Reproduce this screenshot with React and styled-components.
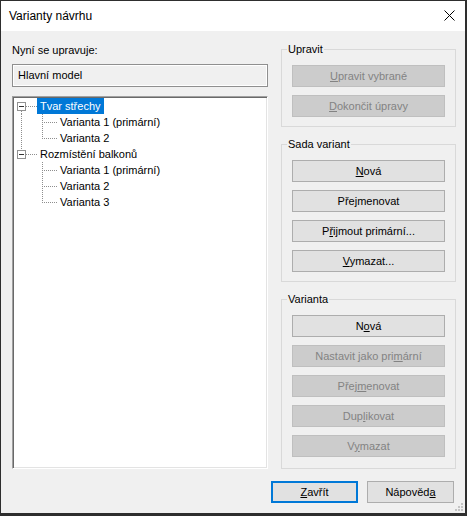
import React from 'react';
import styled, { createGlobalStyle } from 'styled-components';

const GlobalStyle = createGlobalStyle`
  html, body {
    margin: 0;
    padding: 0;
    background: #f0f0f0;
  }
  body {
    font-family: "Liberation Sans", Arial, sans-serif;
    font-size: 11px;
    color: #000;
  }
  * { box-sizing: border-box; }
`;

const tree = [
  { label: 'Tvar střechy', selected: true, children: ['Varianta 1 (primární)', 'Varianta 2'] },
  { label: 'Rozmístění balkonů', children: ['Varianta 1 (primární)', 'Varianta 2', 'Varianta 3'] },
];

function App() {
  return (
    <>
      <GlobalStyle />
      <Window>
        <TitleBar>
          <Title>Varianty návrhu</Title>
          <CloseButton>
            <svg width="11" height="11" viewBox="0 0 11 11">
              <path d="M0.5 0.5 L10.5 10.5 M10.5 0.5 L0.5 10.5" stroke="#000" strokeWidth="1" />
            </svg>
          </CloseButton>
        </TitleBar>

        <Content>
          <LeftColumn>
            <Label>Nyní se upravuje:</Label>
            <ReadOnlyField>Hlavní model</ReadOnlyField>
            <TreeBox>
              {tree.map((node, i) => {
                const hasPrev = i > 0;
                const hasNext = i < tree.length - 1;
                return (
                  <React.Fragment key={node.label}>
                    <TreeRow>
                      <svg width="23" height="16" viewBox="0 0 23 16" shapeRendering="crispEdges">
                        {hasPrev && <Dotted x1="7.5" y1="0" x2="7.5" y2="4" />}
                        {hasNext && <Dotted x1="7.5" y1="13" x2="7.5" y2="16" />}
                        <Dotted x1="12" y1="8.5" x2="23" y2="8.5" />
                        <rect x="3.5" y="4.5" width="8" height="8" fill="#fff" stroke="#919191" />
                        <line x1="5" y1="8.5" x2="10" y2="8.5" stroke="#333" />
                      </svg>
                      <ItemLabel $selected={node.selected}>{node.label}</ItemLabel>
                    </TreeRow>
                    {node.children.map((child, j) => {
                      const last = j === node.children.length - 1;
                      return (
                        <TreeRow key={j}>
                          <svg width="43" height="16" viewBox="0 0 43 16" shapeRendering="crispEdges">
                            {hasNext && <Dotted x1="7.5" y1="0" x2="7.5" y2="16" />}
                            <Dotted x1="28.5" y1="0" x2="28.5" y2={last ? 9 : 16} />
                            <Dotted x1="30" y1="8.5" x2="43" y2="8.5" />
                          </svg>
                          <ItemLabel>{child}</ItemLabel>
                        </TreeRow>
                      );
                    })}
                  </React.Fragment>
                );
              })}
            </TreeBox>
          </LeftColumn>

          <RightColumn>
            <Group>
              <Legend>Upravit</Legend>
              <Button disabled><u>U</u>pravit vybrané</Button>
              <Button disabled><u>D</u>okončit úpravy</Button>
            </Group>

            <Group>
              <Legend>Sada variant</Legend>
              <Button><u>N</u>ová</Button>
              <Button>Pře<u>j</u>menovat</Button>
              <Button>P<u>ř</u>ijmout primární...</Button>
              <Button><u>V</u>ymazat...</Button>
            </Group>

            <Group $grow>
              <Legend>Varianta</Legend>
              <Button>N<u>o</u>vá</Button>
              <Button disabled>Nastavit jako pri<u>m</u>ární</Button>
              <Button disabled>Přej<u>m</u>enovat</Button>
              <Button disabled>Dup<u>l</u>ikovat</Button>
              <Button disabled>V<u>y</u>mazat</Button>
            </Group>
          </RightColumn>
        </Content>

        <Footer>
          <FooterButton $default><u>Z</u>avřít</FooterButton>
          <FooterButton>Nápověd<u>a</u></FooterButton>
        </Footer>

        <Grip>
          <svg width="9" height="9" viewBox="0 0 9 9">
            <rect x="6" y="0" width="2" height="2" fill="#c4c4c4" />
            <rect x="3" y="3" width="2" height="2" fill="#c4c4c4" />
            <rect x="6" y="3" width="2" height="2" fill="#c4c4c4" />
            <rect x="0" y="6" width="2" height="2" fill="#c4c4c4" />
            <rect x="3" y="6" width="2" height="2" fill="#c4c4c4" />
            <rect x="6" y="6" width="2" height="2" fill="#c4c4c4" />
          </svg>
        </Grip>
      </Window>
    </>
  );
}

export default App;

const Dotted = (props) => (
  <line {...props} stroke="#8e8e8e" strokeWidth="1" strokeDasharray="1 1" />
);

const Window = styled.div`
  position: relative;
  width: 467px;
  height: 516px;
  display: flex;
  flex-direction: column;
  background: #f0f0f0;
  border-style: solid;
  border-color: #2e2e2e;
  border-width: 1px 2px 3px 1px;
`;

const TitleBar = styled.div`
  height: 30px;
  flex-shrink: 0;
  display: flex;
  align-items: center;
  justify-content: space-between;
  background: #fff;
  padding-left: 8px;
`;

const Title = styled.div`
  font-size: 12px;
  color: #000;
`;

const CloseButton = styled.div`
  width: 32px;
  height: 30px;
  display: flex;
  align-items: center;
  justify-content: center;
  padding-bottom: 1px;
`;

const Content = styled.div`
  flex: 1;
  display: grid;
  grid-template-columns: 256px 175px;
  column-gap: 13px;
  padding: 11px 9px 0 11px;
`;

const LeftColumn = styled.div`
  display: flex;
  flex-direction: column;
  min-height: 0;
`;

const Label = styled.div`
  margin-top: 2px;
  line-height: 13px;
`;

const ReadOnlyField = styled.div`
  margin-top: 7px;
  height: 23px;
  line-height: 21px;
  padding-left: 5px;
  border: 1px solid #8f8f8f;
  box-shadow: inset 1px 1px 0 #fff, inset -1px -1px 0 #fff;
  background: #f0f0f0;
`;

const TreeBox = styled.div`
  margin-top: 9px;
  flex: 1;
  background: #fff;
  border-style: solid;
  border-width: 1px;
  border-color: #a0a0a0 #fff #fff #a0a0a0;
  box-shadow: inset 1px 1px 0 #696969, inset -1px -1px 0 #e3e3e3;
  padding: 1px 0 0 1px;
`;

const TreeRow = styled.div`
  height: 16px;
  display: flex;
  align-items: center;

  svg {
    flex-shrink: 0;
    display: block;
  }
`;

const ItemLabel = styled.span`
  height: 16px;
  line-height: 16px;
  padding: 0 3px;
  white-space: nowrap;
  background: ${(p) => (p.$selected ? '#0078d7' : 'transparent')};
  color: ${(p) => (p.$selected ? '#fff' : '#000')};
`;

const RightColumn = styled.div`
  display: flex;
  flex-direction: column;
  gap: 10px;
`;

const Group = styled.fieldset`
  margin: 0;
  min-inline-size: 0;
  padding: 9px 10px 9px 10px;
  border: 1px solid #d9d9d9;
  display: flex;
  flex-direction: column;
  gap: 8px;
  flex: ${(p) => (p.$grow ? 1 : 'none')};
`;

const Legend = styled.legend`
  margin-left: -5px;
  padding: 0 1px;
  line-height: 14px;
`;

const Button = styled.button`
  height: 22px;
  width: 100%;
  margin: 0;
  padding: 0;
  font-family: "Liberation Sans", Arial, sans-serif;
  font-size: 11px;
  background: ${(p) => (p.disabled ? '#cccccc' : '#e1e1e1')};
  border: 1px solid ${(p) => (p.disabled ? '#bfbfbf' : '#adadad')};
  color: ${(p) => (p.disabled ? '#838383' : '#000')};
  border-radius: 0;
`;

const Footer = styled.div`
  height: 44px;
  flex-shrink: 0;
  display: flex;
  justify-content: flex-end;
  align-items: flex-start;
  gap: 9px;
  padding: 12px 11px 0 0;
`;

const FooterButton = styled.button`
  width: 87px;
  height: 22px;
  margin: 0;
  padding: 0;
  font-family: "Liberation Sans", Arial, sans-serif;
  font-size: 11px;
  color: #000;
  background: #e1e1e1;
  border: 1px solid ${(p) => (p.$default ? '#0078d7' : '#adadad')};
  box-shadow: ${(p) => (p.$default ? 'inset 0 0 0 1px #0078d7' : 'none')};
  border-radius: 0;
`;

const Grip = styled.div`
  position: absolute;
  right: 1px;
  bottom: 1px;
  line-height: 0;
`;
